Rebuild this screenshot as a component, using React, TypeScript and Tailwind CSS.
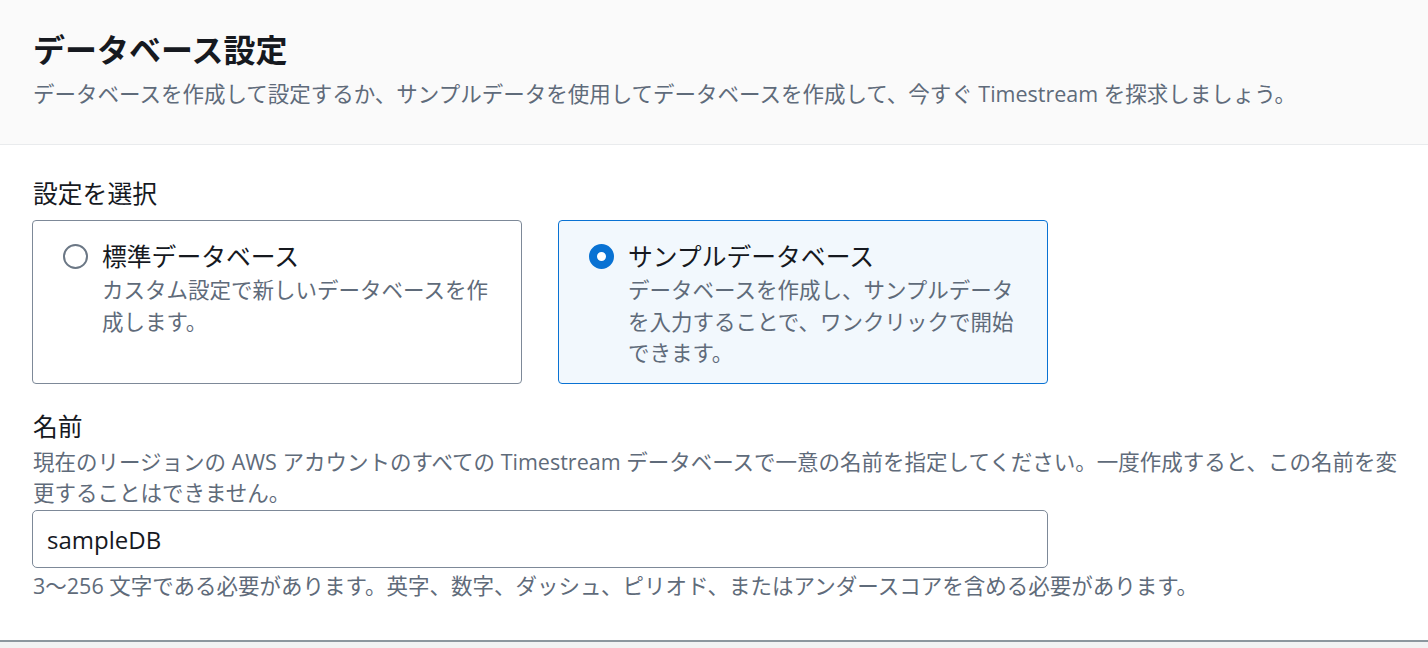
import {useState} from 'react';

const font = 'font-["Open_Sans","Noto_Sans_CJK_JP",sans-serif]';

const options = [
  {
    id: 'standard',
    title: '標準データベース',
    description: 'カスタム設定で新しいデータベースを作成します。',
  },
  {
    id: 'sample',
    title: 'サンプルデータベース',
    description: 'データベースを作成し、サンプルデータを入力することで、ワンクリックで開始できます。',
  },
];

export default function App() {
  const [selected, setSelected] = useState('sample');
  const [name, setName] = useState('sampleDB');

  return (
    <div className={`w-[1428px] h-[648px] overflow-hidden bg-[#f2f3f3] ${font}`}>
      <div className="bg-white border-b-2 border-[#8c979e]">
        <div className="h-[145px] bg-[#fafafa] border-b border-[#e9ebed] pl-[33px] pr-[28px] pt-[30px]">
          <h2 className="text-[32px] leading-[40px] font-bold text-[#16191f]">データベース設定</h2>
          <p className="mt-[8px] text-[21.5px] leading-[32px] text-[#5f6b7a]">
            データベースを作成して設定するか、サンプルデータを使用してデータベースを作成して、今すぐ Timestream を探求しましょう。
          </p>
        </div>

        <div className="pl-[32px] pr-[28px] pt-[30px] pb-[38px]">
          <div className="text-[24.8px] leading-[36px] text-[#16191f] pl-px">設定を選択</div>

          <div className="mt-[9px] w-[1016px] grid grid-cols-2 gap-[36px]">
            {options.map((opt) => {
              const active = selected === opt.id;
              return (
                <button
                  key={opt.id}
                  onClick={() => setSelected(opt.id)}
                  className={`h-[164px] text-left flex items-start gap-[14px] rounded-[4px] border pl-[30px] pr-[24px] pt-[19px] ${
                    active ? 'border-[#0972d3] bg-[#f2f8fd]' : 'border-[#7d8998] bg-white'
                  }`}
                >
                  <span
                    className={`mt-[4px] shrink-0 w-[25px] h-[25px] rounded-full ${
                      active ? 'border-[8px] border-[#0972d3] bg-white' : 'border-2 border-[#6b7785] bg-white'
                    }`}
                  />
                  <span className="flex flex-col">
                    <span className="text-[24.8px] leading-[32px] text-[#16191f]">{opt.title}</span>
                    <span className="mt-[2px] text-[21.5px] leading-[31.5px] text-[#5f6b7a]">{opt.description}</span>
                  </span>
                </button>
              );
            })}
          </div>

          <div className="mt-[24px] text-[24.8px] leading-[36px] text-[#16191f] pl-px">名前</div>
          <p className="mt-[2px] text-[21.5px] leading-[31px] text-[#5f6b7a] pl-px">
            現在のリージョンの AWS アカウントのすべての Timestream データベースで一意の名前を指定してください。一度作成すると、この名前を変更することはできません。
          </p>
          <input
            value={name}
            onChange={(e) => setName(e.target.value)}
            className={`mt-[2px] block w-[1016px] h-[58px] rounded-[5px] border border-[#7d8998] bg-white px-[14px] text-[24px] text-[#16191f] outline-none ${font}`}
          />
          <p className="mt-[2px] text-[21.5px] leading-[32px] text-[#5f6b7a] pl-px">
            3〜256 文字である必要があります。英字、数字、ダッシュ、ピリオド、またはアンダースコアを含める必要があります。
          </p>
        </div>
      </div>
    </div>
  );
}
